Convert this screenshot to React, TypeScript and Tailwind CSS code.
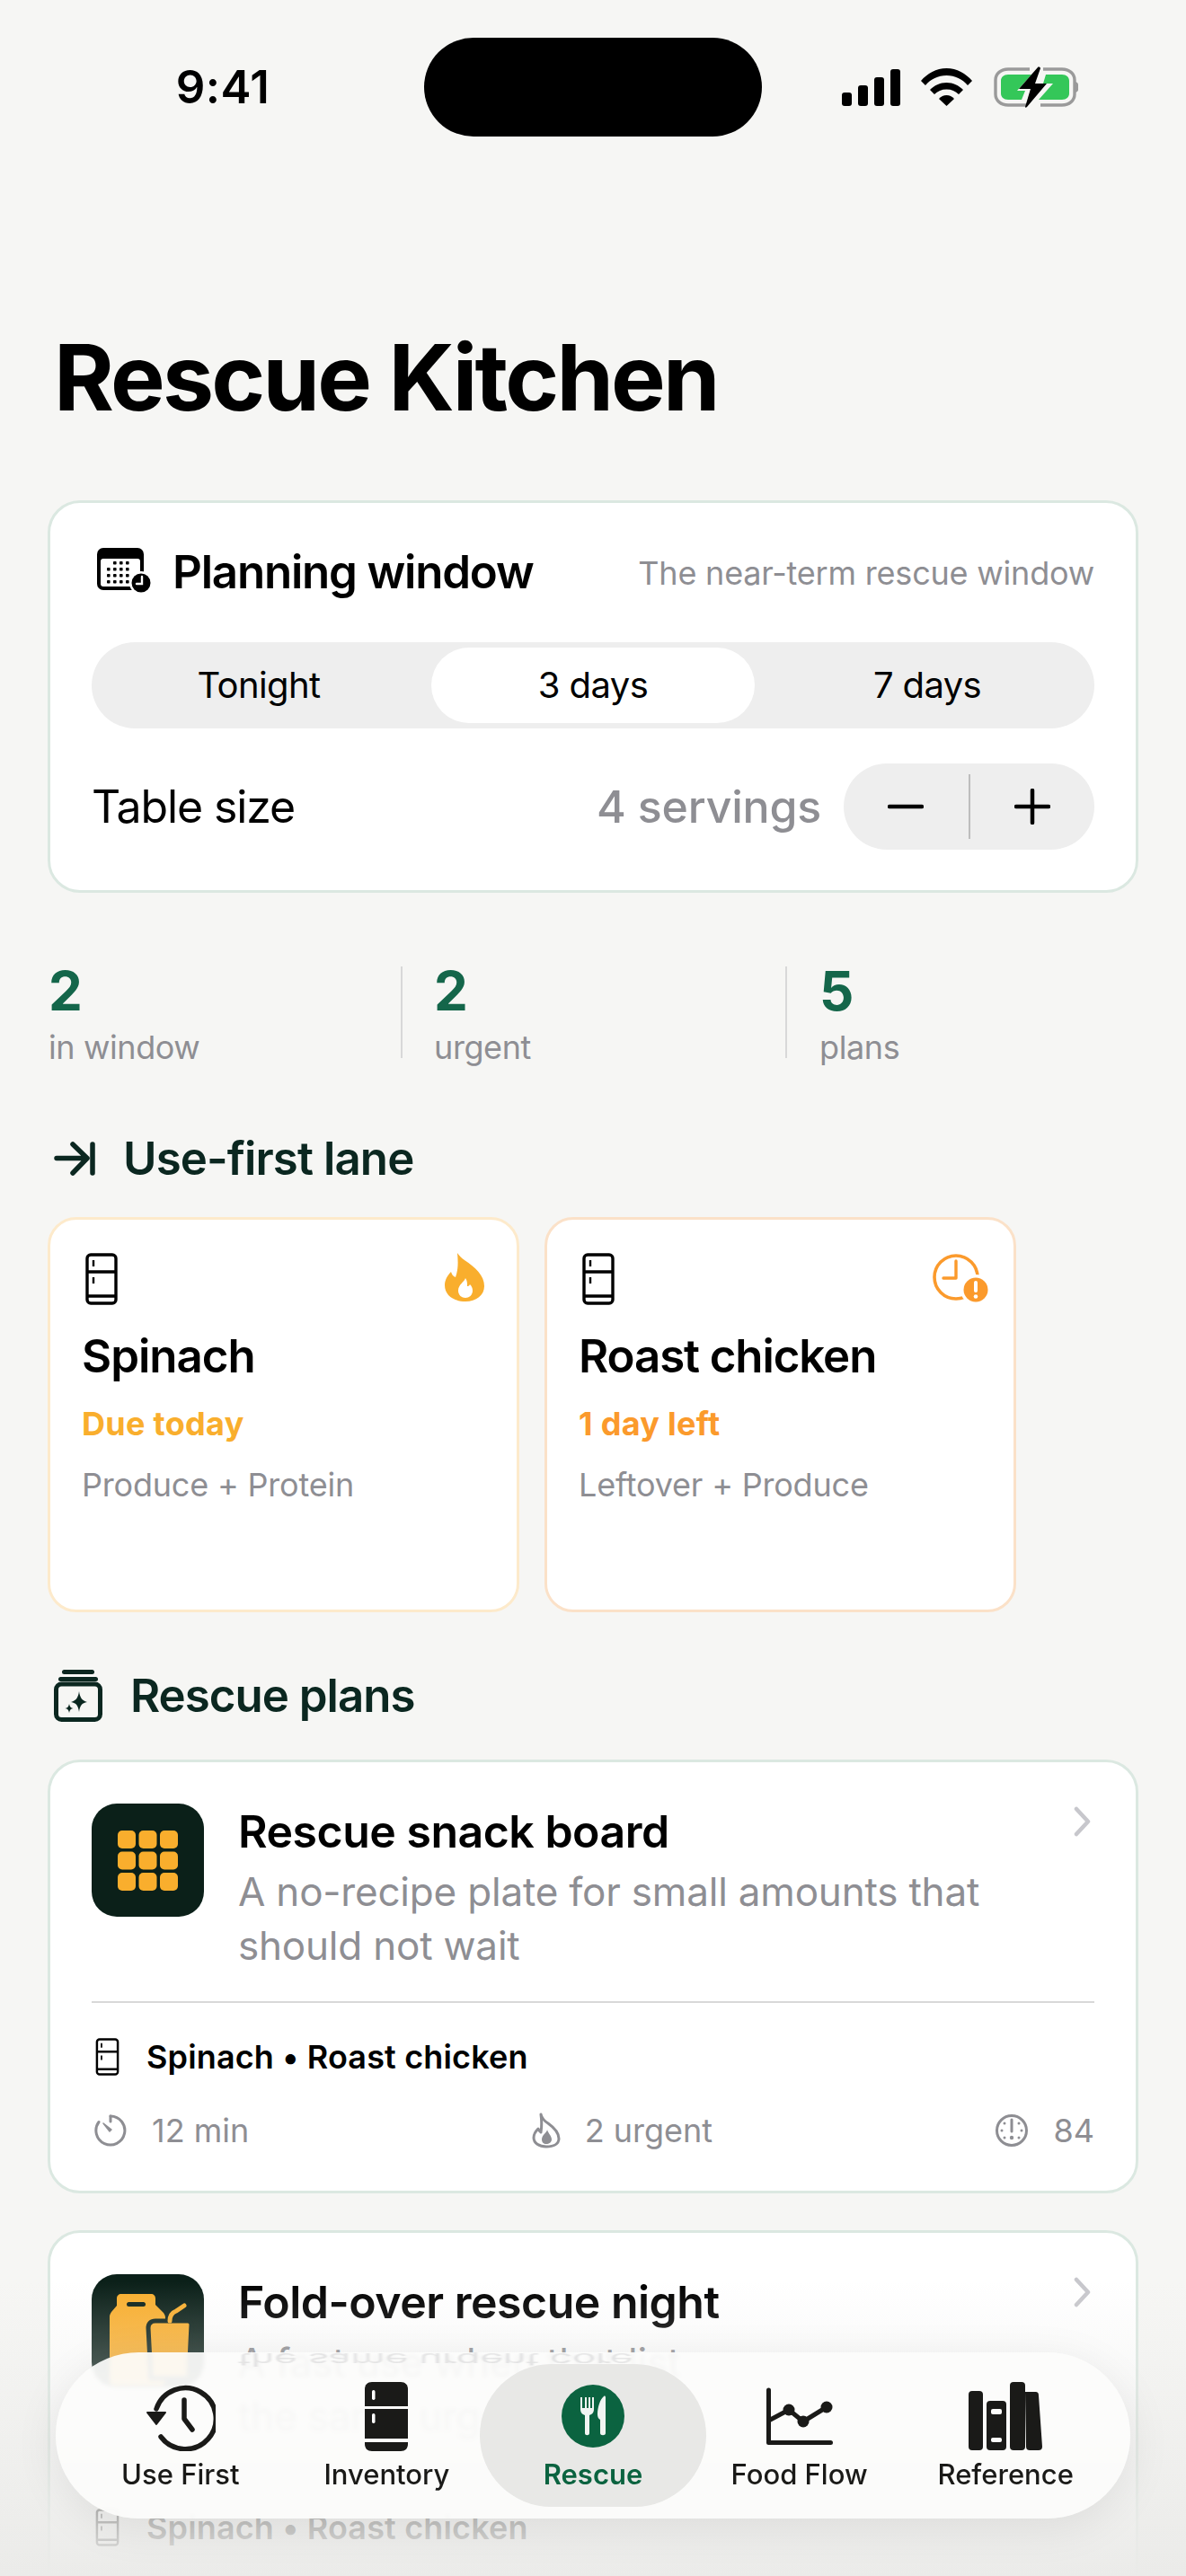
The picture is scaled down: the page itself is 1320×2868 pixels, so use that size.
import React from 'react';

const Fridge = ({ className }: { className: string }) => (
  <svg viewBox="0 0 36 58" className={className} fill="none" stroke="currentColor" strokeWidth="3.4">
    <rect x="2" y="2" width="32" height="54" rx="4" />
    <path d="M2 21h32M2 48h32" />
    <path d="M9 8v7M9 27v7" strokeWidth="2.4" />
  </svg>
);

const CalendarClock = () => (
  <svg viewBox="0 0 62 52" className="w-[62px] h-[52px] shrink-0">
    <rect x="0" y="0" width="52" height="47" rx="7" fill="#000" />
    <rect x="4" y="12" width="44" height="31" rx="3" fill="#fff" />
    <g fill="#000">
      {[15, 22, 29, 36].map((y, i) =>
        [20, 27, 34, 41].map((x) =>
          i === 0 && x < 27 ? null : <rect key={`${x}-${y}`} x={x - 9} y={y} width="3.6" height="3.6" rx="0.8" />
        )
      )}
    </g>
    <circle cx="49" cy="39" r="13" fill="#fff" />
    <circle cx="49" cy="39" r="10.5" fill="#000" />
    <path d="M50 32v8h-6" stroke="#fff" strokeWidth="2.4" fill="none" strokeLinecap="round" />
  </svg>
);

const Flame = () => (
  <svg viewBox="0 0 44 54" className="w-[44px] h-[54px]">
    <path
      fillRule="evenodd"
      fill="#f9ae2d"
      d="M14 0c2 3 4 5 8 8 12 8 22 17 22 29 0 10-9 17-21 17C10 54 0 47 0 36c0-6 3-11 7-15 1 3 2 5 5 6 3-8 3-17 2-27Zm9 28c-1 4-8 7-8 14 0 5 4 8 8 8s8-3 8-8c0-3-1-5-3-7-1 2-2 2-3 2 0-4 0-6-2-9Z"
    />
  </svg>
);

const ClockAlert = () => (
  <svg viewBox="0 0 62 56" className="w-[62px] h-[56px]">
    <circle cx="26" cy="27" r="24" fill="none" stroke="#fb9a2c" strokeWidth="3.6" />
    <path d="M26 9v19H12" fill="none" stroke="#fb9a2c" strokeWidth="3.4" strokeLinecap="round" strokeLinejoin="round" />
    <circle cx="48" cy="41" r="17" fill="#fff" />
    <circle cx="48" cy="41" r="13.5" fill="#fb9a2c" />
    <path d="M48 33v9" stroke="#fff" strokeWidth="4" strokeLinecap="round" />
    <circle cx="48" cy="48.5" r="2.3" fill="#fff" />
  </svg>
);

const ArrowToLine = () => (
  <svg viewBox="0 0 46 38" className="w-[46px] h-[38px] shrink-0" fill="none" stroke="#0b2720" strokeWidth="5.5" strokeLinecap="round" strokeLinejoin="round">
    <path d="M3 18.500h34M21 3l16 15.500L21 35M43 3v32" />
  </svg>
);

const JarSpark = () => (
  <svg viewBox="0 0 54 58" className="w-[54px] h-[58px] shrink-0" fill="none">
    <rect x="9" y="0" width="36" height="5" rx="2.500" fill="#0b2720" />
    <rect x="5" y="8" width="44" height="5" rx="2.500" fill="#0b2720" />
    <rect x="2.500" y="16" width="49" height="39.500" rx="6" stroke="#0b2720" strokeWidth="5" />
    <path d="M28 24c1 7 3 10 9 12-6 1-8 4-9 11-1-7-3-10-9-11 6-2 8-5 9-12Z" fill="#0b2720" />
    <path d="M17 38c.6 3 1.600 4.400 4.500 5-2.900.6-3.900 2-4.500 5-.6-3-1.600-4.400-4.500-5 2.900-.6 3.900-2 4.500-5Z" fill="#0b2720" />
  </svg>
);

const SnackGrid = () => (
  <svg viewBox="0 0 67 67" className="w-[67px] h-[67px]" fill="#f9ae2d">
    {[0, 23.5, 47].map((y) =>
      [0, 23.5, 47].map((x) => <rect key={`${x}-${y}`} x={x} y={y} width="20" height="20" rx="5" />)
    )}
  </svg>
);

const TakeoutIcon = () => (
  <svg viewBox="0 0 125 126" className="w-[125px] h-[126px] rounded-[28px] bg-[#0b2019] shrink-0">
    <path d="M33 22h33c3 0 5 2 5 5v7l9 9c1 2 2 3 2 5v70c0 4-2 6-6 6H27c-5 0-7-2-7-6V47c0-2 1-3 2-5l6-7v-8c0-3 2-5 5-5Z" fill="#f9ae2d" />
    <rect x="39" y="31" width="21" height="5" rx="2.500" fill="#0b2019" />
    <path d="M66 116l-3-56c0-5 3-8 8-8h36c3 0 4 2 4 4l-3 60Z" fill="#f9ae2d" stroke="#0b2019" strokeWidth="5" />
    <path d="M87 52c0-6 2-9 7-11l9-6" fill="none" stroke="#f9ae2d" strokeWidth="5" strokeLinecap="round" />
  </svg>
);

const Chevron = () => (
  <svg viewBox="0 0 20 34" className="w-[20px] h-[34px] shrink-0 mt-[3px] mr-[3px]" fill="none" stroke="#c7c7cc" strokeWidth="4.5" strokeLinecap="round" strokeLinejoin="round">
    <path d="M3 3l13 14L3 31" />
  </svg>
);

const TimerSmall = () => (
  <svg viewBox="0 0 38 38" className="w-[38px] h-[38px] shrink-0" fill="none" stroke="#8e8e93" strokeWidth="3">
    <path d="M19 3a16 16 0 1 1-13 6.500" strokeLinecap="round" />
    <path d="M19 3v6" strokeLinecap="round" />
    <path d="M11 11l7 9 2-2Z" fill="#8e8e93" strokeWidth="1.500" strokeLinejoin="round" />
  </svg>
);

const FlameSmall = () => (
  <svg viewBox="0 0 32 40" className="w-[32px] h-[40px] shrink-0" fill="none">
    <path d="M10 2c1 4 3 7 8 10 7 5 12 10 12 17 0 6-6 9-14 9-8 0-14-4-14-10 0-4 2-7 5-10 .7 2 2 3 3 4 1-6 1-13 0-20Z" stroke="#8e8e93" strokeWidth="3" strokeLinejoin="round" />
    <path d="M17 19c0 3-6 6-6 11 0 3 2 5 5 5s6-2 6-5c0-4-4-7-5-11Z" fill="#8e8e93" />
  </svg>
);

const GaugeSmall = () => (
  <svg viewBox="0 0 38 38" className="w-[38px] h-[38px] shrink-0" fill="none" stroke="#8e8e93">
    <circle cx="19" cy="19" r="16.500" strokeWidth="3" />
    <path d="M19 7v13" strokeWidth="3" strokeLinecap="round" />
    <g fill="#8e8e93" stroke="none">
      <circle cx="19" cy="27" r="2.200" />
      <circle cx="11" cy="11" r="1.500" /><circle cx="27" cy="11" r="1.500" />
      <circle cx="8" cy="19" r="1.500" /><circle cx="30" cy="19" r="1.500" />
      <circle cx="11" cy="27" r="1.500" /><circle cx="27" cy="27" r="1.500" />
    </g>
  </svg>
);

const HistoryIcon = () => (
  <svg viewBox="0 0 78 78" className="w-[78px] h-[78px]" fill="none" stroke="#1a1a18" strokeWidth="5.500" strokeLinecap="round" strokeLinejoin="round">
    <path d="M12 31A34 34 0 1 1 17 62" />
    <path d="M43 21v21l9 12" />
    <path d="M2 35h20L12 48Z" fill="#1a1a18" strokeWidth="2" />
  </svg>
);

const FridgeSolid = () => (
  <svg viewBox="0 0 48 77" className="w-[48px] h-[77px]">
    <path d="M8 0h32c5 0 8 3 8 8v19H0V8c0-5 3-8 8-8Z" fill="#1a1a18" />
    <rect x="0" y="30" width="48" height="33" fill="#1a1a18" />
    <path d="M0 67h48v2c0 5-3 8-8 8H8c-5 0-8-3-8-8Z" fill="#1a1a18" />
    <rect x="8" y="9" width="3.500" height="11" rx="1.700" fill="#fff" />
    <rect x="8" y="35" width="3.500" height="11" rx="1.700" fill="#fff" />
  </svg>
);

const RescueIcon = () => (
  <svg viewBox="0 0 70 70" className="w-[70px] h-[70px]">
    <circle cx="35" cy="35" r="35" fill="#0b6340" />
    <path d="M21 14v13c0 4 2 6 5 7v20c0 3 5 3 5 0V34c3-1 5-3 5-7V14h-2v12h-2V14h-2v12h-2V14h-2v12h-3V14Z" fill="#f1f5f2" />
    <path d="M47 13c-4 3-7 12-7 20 0 3 1 5 3 6v15c0 3 6 3 6 0V14c0-1-1-2-2-1Z" fill="#f1f5f2" />
  </svg>
);

const FlowIcon = () => (
  <svg viewBox="0 0 74 64" className="w-[74px] h-[64px]" fill="none" stroke="#1a1a18" strokeWidth="5" strokeLinecap="round" strokeLinejoin="round">
    <path d="M2.500 3v58.500h69" />
    <path d="M2.500 37L25 25l16 13 26-16" />
    <g fill="#1a1a18" stroke="none">
      <circle cx="25" cy="25" r="6.500" />
      <circle cx="41" cy="38" r="6.500" />
      <circle cx="67" cy="22" r="6.500" />
    </g>
  </svg>
);

const BooksIcon = () => (
  <svg viewBox="0 0 82 76" className="w-[82px] h-[76px]" fill="#1a1a18">
    <rect x="0" y="10" width="16" height="66" rx="4" />
    <rect x="20" y="21" width="22" height="55" rx="4" />
    <rect x="46" y="0" width="17" height="76" rx="4" />
    <path d="M63 11h11c3 0 4 1 4 4l4 57c0 3-2 4-4 4H68c-2 0-4-1-4-4Z" />
    <rect x="25" y="30" width="12" height="6" rx="2" fill="#fcfcfb" />
    <rect x="25" y="62" width="12" height="5" rx="2" fill="#fcfcfb" />
  </svg>
);

const StatusIcons = () => (
  <div className="flex items-center pl-[89px]">
    <svg viewBox="0 0 65 41" className="w-[65px] h-[41px]" fill="#000">
      <rect x="0" y="26" width="11" height="15" rx="3" />
      <rect x="18" y="18" width="11" height="23" rx="3" />
      <rect x="36" y="9" width="11" height="32" rx="3" />
      <rect x="54" y="0" width="11" height="41" rx="3" />
    </svg>
    <svg viewBox="0 0 57 42" className="w-[57px] h-[42px] ml-[23px]" fill="#000">
      <path d="M0 14C7 6 17 0 28.500 0S50 6 57 14l-5 5C46 12 38 8 28.500 8S11 12 5 19Z" />
      <path d="M10 24c5-5 11-8 18.500-8S42 19 47 24l-5 5c-3.500-3.500-8-5.500-13.500-5.500S18.500 25.500 15 29Z" />
      <path d="M20 34c2.500-2.500 5-4 8.500-4s6 1.500 8.500 4L28.500 42Z" />
    </svg>
    <svg viewBox="0 0 94 46" className="w-[94px] h-[46px] ml-[24px]">
      <path d="M40 3H16C8 3 2 8 2 15v16c0 7 6 12 14 12h21M52 43h24c8 0 14-5 14-12V15c0-7-6-12-14-12H55" fill="none" stroke="#9a9a9a" strokeWidth="3.400" />
      <path d="M91 17c3 1 3.500 3 3.500 6s-.5 5-3.500 6Z" fill="#9a9a9a" />
      <path d="M16 9h26L26 27h9l-4 10H16c-5 0-8-3-8-7V16c0-4 3-7 8-7Z" fill="#34c759" />
      <path d="M50 37h26c5 0 8-3 8-7V16c0-4-3-7-8-7H58l-3 10h11L50 37Z" fill="#34c759" />
      <path d="M49 1 28 25h13l-6 20c0 1 1 1 2 0l22-26H46l6-17c0-1-2-2-3-1Z" fill="#000" />
    </svg>
  </div>
);

const tabs = [
  { label: 'Use First', icon: <HistoryIcon /> },
  { label: 'Inventory', icon: <FridgeSolid /> },
  { label: 'Rescue', icon: <RescueIcon />, active: true },
  { label: 'Food Flow', icon: <FlowIcon /> },
  { label: 'Reference', icon: <BooksIcon /> },
];

const MetaItem = ({ icon, text }: { icon: React.ReactNode; text: string }) => (
  <div className="flex items-center gap-[27px] text-[36px] leading-[48px] text-[#8e8e93]">
    {icon}
    <span>{text}</span>
  </div>
);

const PlanCard = ({ icon, title, lines, time, urgent, score }: { icon: React.ReactNode; title: string; lines: string[]; time: string; urgent: string; score: string }) => (
  <div className="mt-[41px] mx-[53px] bg-white border-[3px] border-[#dbe8e1] rounded-[36px] px-[46px] pt-[46px] pb-[43px]">
    <div className="flex gap-[38px]">
      {icon}
      <div className="flex-1">
        <div className="text-[50px] leading-[60px] font-semibold text-black mt-[1px] tracking-[-0.5px]">{title}</div>
        <div className="text-[44px] leading-[60px] text-[#8e8e93] mt-[7px] tracking-[-0.2px]">
          {lines.map((l) => (
            <div key={l}>{l}</div>
          ))}
        </div>
      </div>
      <Chevron />
    </div>
    <div className="h-[2px] bg-[#d8d8d8] mt-[32px]" />
    <div className="flex items-center gap-[30px] mt-[36px] pl-[4px] h-[48px]">
      <Fridge className="w-[27px] h-[42px] text-black" />
      <span className="text-[36px] font-semibold text-black tracking-[0.15px]">Spinach • Roast chicken</span>
    </div>
    <div className="flex justify-between mt-[34px] h-[48px] pl-[2px]">
      <MetaItem icon={<TimerSmall />} text={time} />
      <MetaItem icon={<FlameSmall />} text={urgent} />
      <MetaItem icon={<GaugeSmall />} text={score} />
    </div>
  </div>
);

export default function App() {
  return (
    <div className="relative w-[1320px] h-[2868px] overflow-hidden bg-[#f6f6f4] text-black font-['Inter','Liberation_Sans',sans-serif]">
      {/* status bar */}
      <div className="grid grid-cols-[472px_376px_472px] items-center pt-[42px]">
        <div className="flex justify-center pl-[24px] text-[51px] leading-[60px] font-semibold tracking-[0.4px]">9:41</div>
        <div className="h-[110px] rounded-full bg-black" />
        <StatusIcons />
      </div>

      <h1 className="mt-[208px] pl-[60px] text-[102px] leading-[120px] font-bold tracking-[-2.8px]">Rescue Kitchen</h1>

      {/* planning */}
      <div className="mt-[77px] mx-[53px] bg-white border-[3px] border-[#dbe8e1] rounded-[36px] px-[46px] pt-[50px] pb-[45px]">
        <div className="flex items-center h-[52px]">
          <div className="pl-[6px]">
            <CalendarClock />
          </div>
          <span className="ml-[22px] mt-[2px] text-[51px] font-semibold tracking-[-1.2px]">Planning window</span>
          <span className="ml-auto mt-[3px] text-[36px] text-[#8e8e93] tracking-[-0.2px]">The near-term rescue window</span>
        </div>
        <div className="mt-[53px] h-[96px] rounded-full bg-[#eeeeee] grid grid-cols-3 text-[40px] tracking-[-0.6px]">
          <div className="flex items-center justify-center">Tonight</div>
          <div className="m-[6px] flex items-center justify-center bg-white rounded-full">3 days</div>
          <div className="flex items-center justify-center">7 days</div>
        </div>
        <div className="mt-[39px] flex items-center h-[96px]">
          <span className="text-[50px] tracking-[-1.1px]">Table size</span>
          <span className="ml-auto text-[50px] font-medium text-[#8e8e93] tracking-[-0.2px]">4 servings</span>
          <div className="ml-[25px] w-[279px] h-[96px] rounded-full bg-[#eeeeee] flex items-center">
            <div className="flex-1 flex justify-center">
              <svg viewBox="0 0 40 40" className="w-[40px] h-[40px]" stroke="#000" strokeWidth="4.500" strokeLinecap="round"><path d="M2 20h36" /></svg>
            </div>
            <div className="w-[2px] h-[72px] bg-[#bdbdbd]" />
            <div className="flex-1 flex justify-center">
              <svg viewBox="0 0 40 40" className="w-[40px] h-[40px]" stroke="#000" strokeWidth="4.500" strokeLinecap="round"><path d="M2 20h36M20 2v36" /></svg>
            </div>
          </div>
        </div>
      </div>

      {/* stats */}
      <div className="mt-[82px] mx-[54px] flex h-[102px]">
        {[
          { n: '2', label: 'in window', cls: 'w-[392px]' },
          { n: '2', label: 'urgent', cls: 'w-[428px] pl-[35px] border-l-[2px] border-[#d8d8d8]' },
          { n: '5', label: 'plans', cls: 'flex-1 pl-[36px] border-l-[2px] border-[#d8d8d8]' },
        ].map((s) => (
          <div key={s.label} className={s.cls}>
            <div className="text-[60px] leading-[60px] font-bold text-[#14664a] -mt-[3px]">{s.n}</div>
            <div className="text-[36px] leading-[48px] mt-[9px] text-[#8e8e93] tracking-[-0.4px]">{s.label}</div>
          </div>
        ))}
      </div>

      {/* use first */}
      <div className="mt-[82px] pl-[60px] flex items-center h-[60px]">
        <ArrowToLine />
        <span className="ml-[31px] text-[51px] font-semibold text-[#0b2720] tracking-[-0.9px]">Use-first lane</span>
      </div>
      <div className="mt-[35px] pl-[53px] flex gap-[28px]">
        <div className="w-[525px] h-[440px] bg-white border-[3px] border-[#fdeacb] rounded-[32px] px-[35px] pt-[37px]">
          <div className="flex items-start justify-between">
            <Fridge className="w-[36px] h-[58px] ml-[4px] text-black" />
            <div className="mr-[1px]"><Flame /></div>
          </div>
          <div className="mt-[27px] text-[51px] leading-[60px] font-semibold tracking-[-1px]">Spinach</div>
          <div className="mt-[21px] text-[36px] leading-[48px] font-bold text-[#f9ae2d] tracking-[0.3px]">Due today</div>
          <div className="mt-[20px] text-[36px] leading-[48px] text-[#8e8e93] tracking-[-0.2px]">Produce + Protein</div>
        </div>
        <div className="w-[525px] h-[440px] bg-white border-[3px] border-[#fbe1c8] rounded-[32px] px-[35px] pt-[37px]">
          <div className="flex items-start justify-between">
            <Fridge className="w-[36px] h-[58px] ml-[4px] text-black" />
            <div className="-mr-[7px]"><ClockAlert /></div>
          </div>
          <div className="mt-[27px] text-[51px] leading-[60px] font-semibold tracking-[-1.1px]">Roast chicken</div>
          <div className="mt-[21px] text-[36px] leading-[48px] font-bold text-[#fb9a2c] tracking-[0.3px]">1 day left</div>
          <div className="mt-[20px] text-[36px] leading-[48px] text-[#8e8e93] tracking-[-0.2px]">Leftover + Produce</div>
        </div>
      </div>

      {/* plans */}
      <div className="mt-[63px] pl-[60px] flex items-center h-[60px]">
        <JarSpark />
        <span className="ml-[31px] text-[51px] font-semibold text-[#0b2720] tracking-[-1px]">Rescue plans</span>
      </div>
      <PlanCard
        icon={
          <div className="w-[125px] h-[126px] rounded-[28px] bg-[#0b2019] flex items-center justify-center shrink-0">
            <SnackGrid />
          </div>
        }
        title="Rescue snack board"
        lines={['A no-recipe plate for small amounts that', 'should not wait']}
        time="12 min"
        urgent="2 urgent"
        score="84"
      />
      <PlanCard
        icon={<TakeoutIcon />}
        title="Fold-over rescue night"
        lines={['A fast use when that list', 'the same urgent core']}
        time="20 min"
        urgent="2 urgent"
        score="76"
      />

      {/* bottom fade */}
      <div className="absolute left-0 right-0 bottom-0 h-[328px] bg-linear-to-b from-[#ebebe9]/0 to-[#ebebe9] pointer-events-none" />

      {/* tab bar */}
      <div className="absolute left-[62px] top-[2619px] w-[1196px] h-[185px] rounded-full overflow-hidden bg-[#fcfcfb]/93 backdrop-blur-[2px] shadow-[0_10px_50px_rgba(0,0,0,0.08)]">
        <div aria-hidden className="absolute left-[203px] top-[-12px] text-[44px] leading-[40px] text-[#8e8e93]/20 scale-y-[-0.45] blur-[1px] tracking-[-0.2px]">the same urgent core</div>
        <div className="relative grid grid-cols-5 px-[24px] h-full">
          {tabs.map((t) => (
            <div
              key={t.label}
              className={`flex flex-col items-center rounded-[80px] ${t.active ? 'bg-[#e8e8e6] -mx-[11px] my-[13px] text-[#0b6340]' : 'my-[13px] text-[#1a1a18]'}`}
            >
              <div className="h-[96px] flex items-center justify-center mt-[10px]">{t.icon}</div>
              <div className={`-mt-[3px] text-[31px] leading-[40px] ${t.active ? 'font-semibold' : 'font-medium'}`}>{t.label}</div>
            </div>
          ))}
        </div>
      </div>
    </div>
  );
}
